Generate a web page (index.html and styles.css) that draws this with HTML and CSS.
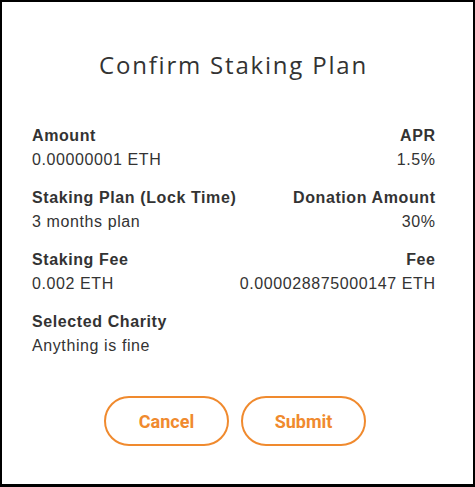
FILE: index.html
```html
<!DOCTYPE html>
<html>
<head>
<meta charset="utf-8">
<link rel="stylesheet" href="styles.css">
</head>
<body>
<div class="dialog">
  <h1 class="title">Confirm Staking Plan</h1>
  <div class="grid">
    <div class="item"><div class="label">Amount</div><div class="value">0.00000001 ETH</div></div>
    <div class="item right"><div class="label">APR</div><div class="value">1.5%</div></div>
    <div class="item"><div class="label">Staking Plan (Lock Time)</div><div class="value">3 months plan</div></div>
    <div class="item right"><div class="label">Donation Amount</div><div class="value">30%</div></div>
    <div class="item"><div class="label">Staking Fee</div><div class="value">0.002 ETH</div></div>
    <div class="item right"><div class="label">Fee</div><div class="value">0.000028875000147 ETH</div></div>
    <div class="item"><div class="label">Selected Charity</div><div class="value">Anything is fine</div></div>
  </div>
  <div class="actions">
    <button class="btn">Cancel</button>
    <button class="btn">Submit</button>
  </div>
</div>
</body>
</html>
```

FILE: styles.css
```css
html, body {
  margin: 0;
  padding: 0;
  background: #fff;
}
.dialog {
  box-sizing: border-box;
  width: 475px;
  height: 487px;
  border: 2px solid #000;
  border-bottom-width: 3px;
  padding: 46px 38px 0 30px;
  font-family: "Liberation Sans", Arial, sans-serif;
  color: #333;
}
.title {
  margin: 0 0 42px;
  text-align: center;
  font-family: "Open Sans", sans-serif;
  font-weight: 500;
  font-size: 24px;
  line-height: 34px;
  color: #333;
  letter-spacing: 1.8px;
}
.grid {
  display: grid;
  grid-template-columns: 1fr 1fr;
  row-gap: 14px;
}
.item {
  white-space: nowrap;
}
.item.right {
  text-align: right;
}
.label {
  font-weight: bold;
  font-size: 16px;
  line-height: 24px;
  letter-spacing: 0.6px;
}
.value {
  font-size: 16px;
  line-height: 24px;
  letter-spacing: 0.6px;
}
.item.right .label,
.item.right .value {
  margin-right: -0.6px;
}
.actions {
  display: flex;
  justify-content: center;
  gap: 12px;
  margin-top: 38px;
  margin-left: 3px;
}
.btn {
  box-sizing: border-box;
  width: 125px;
  height: 50px;
  border: 2px solid #f08a2e;
  border-radius: 25px;
  background: #fff;
  color: #f08a2e;
  font-family: "Roboto", "Liberation Sans", sans-serif;
  font-weight: bold;
  font-size: 18px;
}
```
